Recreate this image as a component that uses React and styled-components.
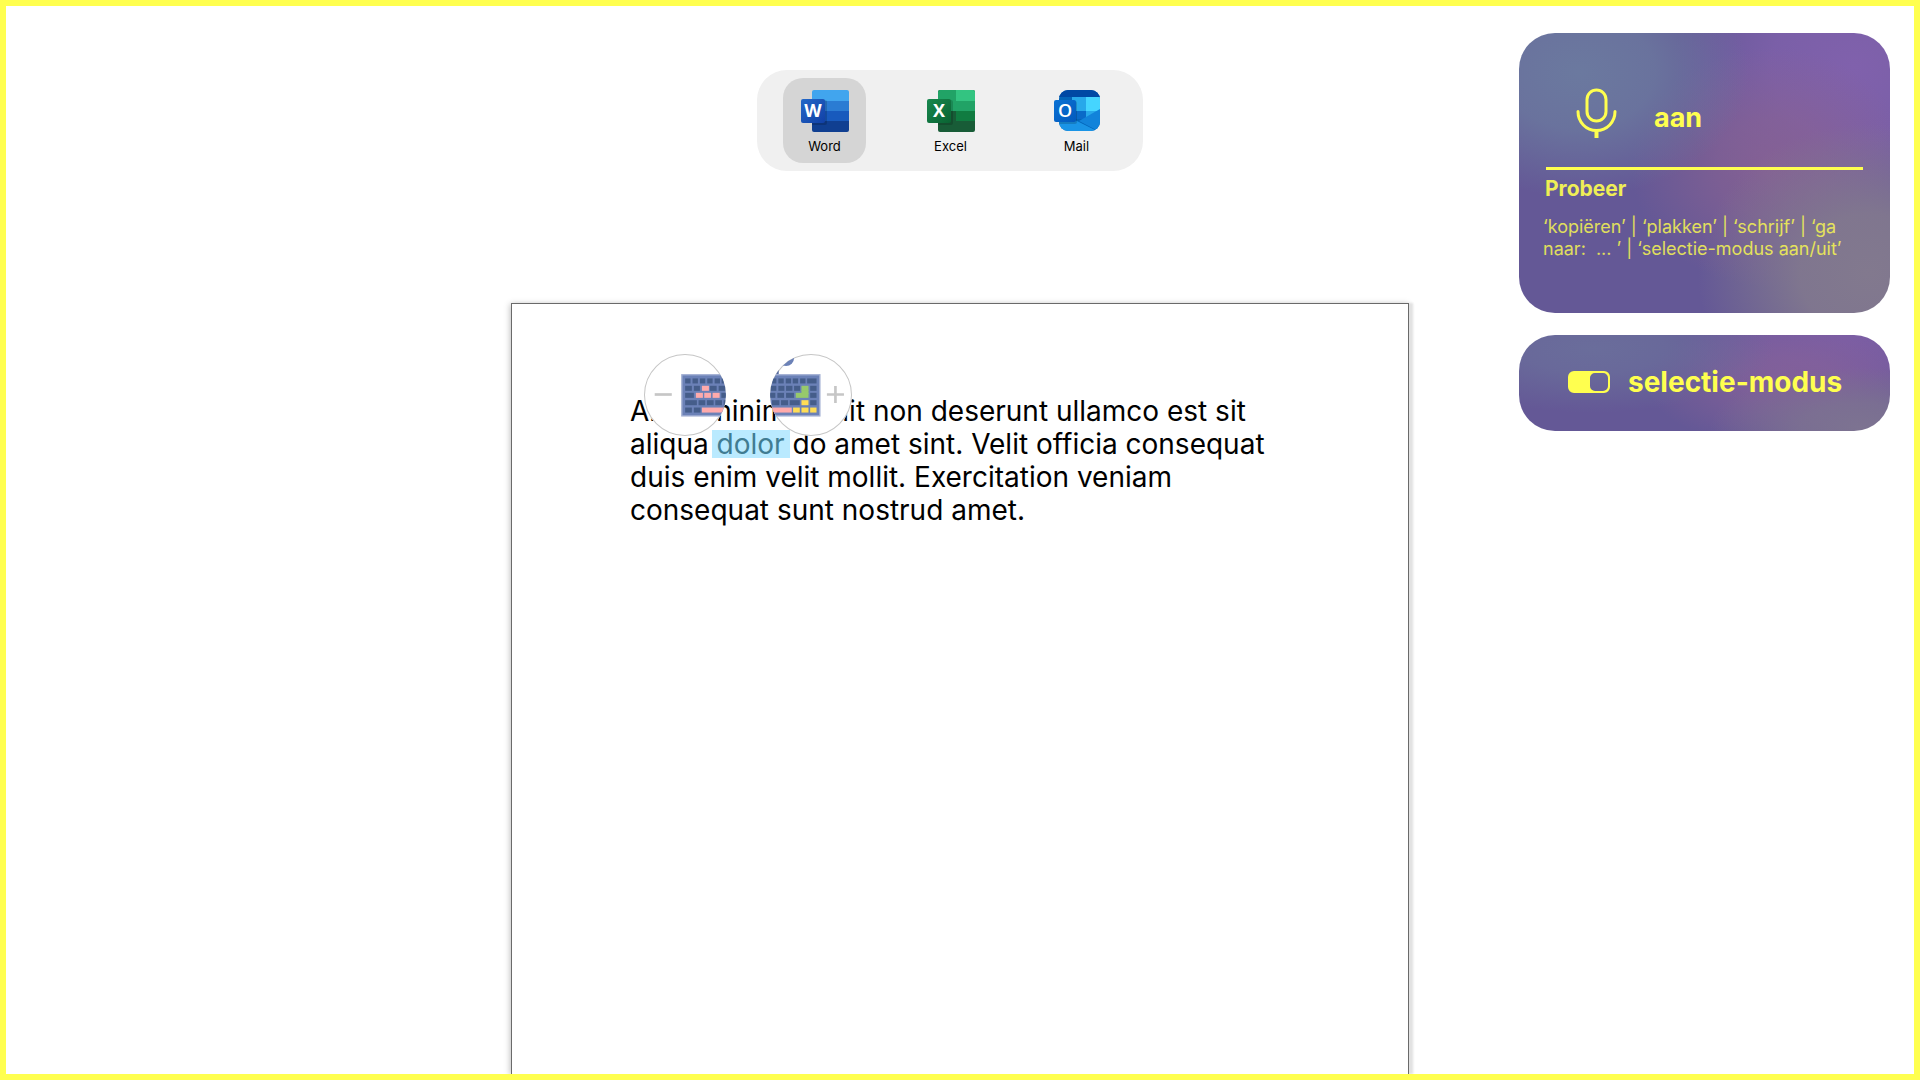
import React, { useState } from "react";
import styled, { createGlobalStyle, css } from "styled-components";

const YELLOW = "#ffff4f";

const GlobalStyle = createGlobalStyle`
  *, *::before, *::after { box-sizing: border-box; }
  body {
    margin: 0;
    background: #ffffff;
    color: #000000;
    font-family: Inter, "Noto Sans", sans-serif;
  }
  button { font: inherit; color: inherit; border: 0; background: none; padding: 0; cursor: pointer; }
  h2, p { margin: 0; }
`;

const Frame = styled.div`
  min-height: 100vh;
  border: 6px solid ${YELLOW};
  display: grid;
  grid-template-columns: 1fr minmax(0, 898px) 1fr;
`;

const Workspace = styled.main`
  grid-column: 2;
  display: flex;
  flex-direction: column;
`;

const ToolbarArea = styled.header`
  display: flex;
  justify-content: center;
  padding: 64px 20px 132px 0;
`;

const Toolbar = styled.nav`
  display: flex;
  gap: 43px;
  padding: 8px 25px 8px 26px;
  border-radius: 30px;
  background: #f0f0f0;
`;

const AppButton = styled.button`
  && {
    width: 83px;
    height: 85px;
    padding: 12px 0 0;
    display: flex;
    flex-direction: column;
    align-items: center;
    gap: 7px;
    border-radius: 20px;
    font-size: 13px;
    line-height: 15px;
    background: ${(p) => (p.$active ? "#d5d5d5" : "transparent")};
  }
`;

const Paper = styled.article`
  flex: 1;
  position: relative;
  padding: 91px 138px 91px 118px;
  border: 1px solid #6a6a6a;
  border-bottom: 0;
  background: #ffffff;
  box-shadow: 4px 0 2px 0 #e2e2e2, -1px 1px 6px 0 rgba(0, 0, 0, 0.25);
  clip-path: inset(-8px -8px 0 -8px);
`;

const Paragraph = styled.p`
  font-size: 28px;
  line-height: 33px;
`;

const Selection = styled.mark`
  display: inline-block;
  line-height: 28px;
  color: #417c92;
  background: #baeaff;
  box-shadow: -5px 0 #baeaff, 5px 0 #baeaff;
`;

const HandleGroup = styled.div`
  position: absolute;
  left: 132px;
  top: 50px;
  display: flex;
  gap: 44px;
`;

const Handle = styled.button`
  && {
    width: 82px;
    height: 82px;
    border-radius: 50%;
    background: #ffffff;
  }
  svg { display: block; }
`;

const Sidebar = styled.aside`
  justify-self: end;
  align-self: start;
  width: 371px;
  margin: 27px 24px 0 0;
  display: flex;
  flex-direction: column;
  gap: 22px;
`;

const cardSurface = css`
  border-radius: 36px;
  color: ${YELLOW};
  background-color: #645896;
`;

const VoiceCard = styled.section`
  ${cardSurface}
  min-height: 280px;
  padding: 47px 26px 0;
  background-image:
    radial-gradient(ellipse 170px 125px at 16% 14%, #6b799f 0%, #6b799fcc 45%, #6b799f00 100%),
    radial-gradient(ellipse 170px 150px at 94% 86%, #82798e 0%, #82798ee6 40%, #82798e00 100%),
    radial-gradient(ellipse 140px 120px at 68% 48%, #8a6292cc 0%, #8a629299 40%, #8a629200 100%),
    radial-gradient(ellipse 180px 160px at 90% 12%, #8061ac 0%, #8061accc 45%, #8061ac00 100%);
`;

const MicButton = styled.button`
  && {
    display: flex;
    align-items: center;
    gap: 31px;
    height: 74px;
    padding-left: 26px;
    font-size: 27px;
    line-height: 33px;
    font-weight: 700;
  }
  svg { margin-bottom: 8px; }
`;

const Rule = styled.hr`
  height: 3px;
  margin: 13px 1px 0;
  border: 0;
  background: ${YELLOW};
`;

const TryTitle = styled.h2`
  margin-top: 6px;
  font-size: 21px;
  line-height: 26px;
  font-weight: 700;
  opacity: 0.9;
`;

const TryText = styled.p`
  margin: 14px 0 0 -2px;
  font-size: 18px;
  line-height: 22px;
  white-space: pre-wrap;
  opacity: 0.8;
`;

const ModeCard = styled.label`
  ${cardSurface}
  height: 96px;
  display: flex;
  align-items: center;
  gap: 18px;
  padding: 0 0 2px 49px;
  font-size: 28px;
  line-height: 33px;
  font-weight: 700;
  cursor: pointer;
  background-image:
    radial-gradient(ellipse 180px 64px at 20% 14%, #6a6d9b 0%, #6a6d9bcc 40%, #6a6d9b00 100%),
    radial-gradient(ellipse 150px 60px at 92% 96%, #7d7391 0%, #7d7391cc 40%, #7d739100 100%),
    radial-gradient(ellipse 140px 64px at 72% 50%, #876298cc 0%, #87629899 40%, #87629800 100%),
    radial-gradient(ellipse 180px 72px at 88% 6%, #7a5da5 0%, #7a5da5cc 40%, #7a5da500 100%);
`;

const Switch = styled.span`
  position: relative;
  display: block;
  width: 42px;
  height: 22px;
  svg { display: block; transform: ${(p) => (p.$on ? "none" : "scaleX(-1)")}; }
`;

const SwitchInput = styled.input`
  position: absolute;
  inset: 0;
  width: 100%;
  height: 100%;
  margin: 0;
  opacity: 0;
  cursor: pointer;
`;

const IconLetter = styled.text`
  font-family: "Open Sans", "Noto Sans", sans-serif;
  font-weight: ${(p) => p.$weight || 700};
  font-size: 18px;
  fill: #ffffff;
  text-anchor: middle;
`;

function WordIcon() {
  return (
    <svg width="48" height="42" viewBox="0 0 48 42" aria-hidden="true">
      <defs>
        <clipPath id="wordPage"><rect x="11" width="37" height="42" rx="2" /></clipPath>
        <linearGradient id="wordTile" x1="0" y1="0" x2="1" y2="1">
          <stop offset="0" stopColor="#2368c8" /><stop offset="1" stopColor="#1140a6" />
        </linearGradient>
      </defs>
      <g clipPath="url(#wordPage)">
        <rect x="11" width="37" height="11" fill="#41a5ee" />
        <rect x="11" y="11" width="37" height="10" fill="#2b7cd3" />
        <rect x="11" y="21" width="37" height="10" fill="#185abd" />
        <rect x="11" y="31" width="37" height="11" fill="#103f91" />
        <rect x="8" y="10" width="18" height="25" rx="2" fill="#000" opacity=".16" />
      </g>
      <rect y="9" width="24" height="24" rx="2" fill="url(#wordTile)" />
      <IconLetter x="12" y="27">W</IconLetter>
    </svg>
  );
}

function ExcelIcon() {
  return (
    <svg width="48" height="42" viewBox="0 0 48 42" aria-hidden="true">
      <defs>
        <clipPath id="excelPage"><rect x="11" width="37" height="42" rx="2" /></clipPath>
        <linearGradient id="excelTile" x1="0" y1="0" x2="1" y2="1">
          <stop offset="0" stopColor="#18884f" /><stop offset="1" stopColor="#0a6332" />
        </linearGradient>
      </defs>
      <g clipPath="url(#excelPage)">
        <rect x="11" width="37" height="42" fill="#185c37" />
        <rect x="11" width="18" height="21" fill="#21a366" />
        <rect x="29" width="19" height="11" fill="#33c481" />
        <rect x="29" y="11" width="19" height="10" fill="#21a366" />
        <rect x="29" y="21" width="19" height="10" fill="#107c41" />
        <rect x="8" y="10" width="18" height="25" rx="2" fill="#000" opacity=".16" />
      </g>
      <rect y="9" width="24" height="24" rx="2" fill="url(#excelTile)" />
      <IconLetter x="12" y="27">X</IconLetter>
    </svg>
  );
}

function MailIcon() {
  return (
    <svg width="48" height="42" viewBox="0 0 48 42" aria-hidden="true">
      <defs>
        <clipPath id="mailBody"><rect x="6" width="41" height="41" rx="9" /></clipPath>
        <linearGradient id="mailTile" x1="0" y1="0" x2="1" y2="1">
          <stop offset="0" stopColor="#0a72d4" /><stop offset="1" stopColor="#0359bd" />
        </linearGradient>
      </defs>
      <g clipPath="url(#mailBody)">
        <rect x="6" width="41" height="42" fill="#0364b8" />
        <rect x="6" width="41" height="7" fill="#0048a4" />
        <rect x="19" y="7" width="14" height="14" fill="#28a8ea" />
        <rect x="19" y="21" width="14" height="8" fill="#0a6ac8" />
        <rect x="33" y="7" width="14" height="14" fill="#45d5ff" />
        <rect x="33" y="21" width="14" height="8" fill="#28a8ea" />
        <path d="M47 19 26 31 47 42Z" fill="#1283da" />
        <path d="M6 22 44 41 40 42H6Z" fill="#1a94e6" />
        <rect x="4" y="11" width="20" height="23" rx="2" fill="#000" opacity=".16" />
      </g>
      <rect x="1" y="10" width="22" height="22" rx="2" fill="url(#mailTile)" />
      <IconLetter x="12" y="27" $weight={600}>O</IconLetter>
    </svg>
  );
}

const ROW_Y = [115, 137, 158, 180, 202];

// Each key is [row, x, width, colour].
function Keys({ keys }) {
  return keys.map(([row, x, width, fill = "#455d8a"]) => (
    <rect key={`${row}-${x}`} x={x} y={ROW_Y[row]} width={width} height="15" fill={fill} />
  ));
}

const PINK = "#ffaaab";
const GOLD = "#ffdd55";
const LEAF = "#97c96b";

const LEFT_KEYS = [
  [0, 196, 16], [0, 218, 16], [0, 240, 16], [0, 262, 16], [0, 284, 16], [0, 305, 16],
  [1, 196, 20], [1, 222, 18], [1, 246, 21, PINK], [1, 270, 20], [1, 296, 20],
  [2, 196, 26], [2, 228, 21, PINK], [2, 253, 20, PINK], [2, 278, 21, PINK], [2, 304, 18],
  [3, 196, 35], [3, 236, 20], [3, 261, 20], [3, 286, 20], [3, 311, 18],
  [4, 196, 20], [4, 222, 20], [4, 246, 80, PINK],
];

const RIGHT_KEYS = [
  [0, 455, 15], [0, 476, 16], [0, 498, 16], [0, 519, 16], [0, 541, 16], [0, 562, 28],
  [1, 453, 17], [1, 476, 18], [1, 499, 19], [1, 523, 18], [1, 545, 21, LEAF], [1, 571, 19],
  [2, 449, 18], [2, 473, 20], [2, 499, 24], [2, 528, 38, LEAF], [2, 571, 19],
  [3, 457, 22], [3, 484, 21], [3, 510, 30], [3, 545, 21, GOLD], [3, 571, 19],
  [4, 440, 76, PINK], [4, 520, 20, GOLD], [4, 545, 21, GOLD], [4, 571, 19, GOLD],
];

function ShrinkDrawing() {
  return (
    <svg width="82" height="82" viewBox="73 42 245 245" aria-hidden="true">
      <defs><clipPath id="shrinkDisc"><circle cx="195.500" cy="164.500" r="122" /></clipPath></defs>
      <circle cx="195.500" cy="164.500" r="121" fill="#fff" stroke="#c6c6c6" strokeWidth="3" />
      <path d="M105 163H156" stroke="#c6c6c6" strokeWidth="8" />
      <g clipPath="url(#shrinkDisc)">
        <rect x="186" y="104" width="150" height="123" fill="#6b81b7" stroke="#a3b0d3" strokeWidth="4" />
        <Keys keys={LEFT_KEYS} />
      </g>
    </svg>
  );
}

function GrowDrawing() {
  return (
    <svg width="82" height="82" viewBox="451 42 245 245" aria-hidden="true">
      <defs><clipPath id="growDisc"><circle cx="573.500" cy="164.500" r="122" /></clipPath></defs>
      <circle cx="573.500" cy="164.500" r="121" fill="#fff" stroke="#c6c6c6" strokeWidth="3" />
      <path d="M621 163H672M646.500 137.500V188.500" stroke="#c6c6c6" strokeWidth="8" />
      <g clipPath="url(#growDisc)">
        <circle cx="499" cy="54" r="24" fill="#6b81b7" />
        <path d="M466 80H477V104H440V80Z" fill="#53699f" />
        <rect x="430" y="104" width="170" height="123" fill="#6b81b7" stroke="#a3b0d3" strokeWidth="4" />
        <Keys keys={RIGHT_KEYS} />
        <rect x="545" y="150" width="21" height="12" fill={LEAF} />
      </g>
    </svg>
  );
}

function MicDrawing() {
  return (
    <svg width="52" height="50" viewBox="0 0 52 50" fill="none" stroke={YELLOW} strokeWidth="3" strokeLinecap="round" aria-hidden="true">
      <rect x="16" y="2" width="19" height="31" rx="9.500" />
      <path d="M7 23.500C7 34 15 42.500 25.500 42.500S44 34 44 23.500" />
      <path d="M25.500 42.500V50" strokeWidth="4" strokeLinecap="butt" />
    </svg>
  );
}

const APPS = [
  { name: "Word", Icon: WordIcon },
  { name: "Excel", Icon: ExcelIcon },
  { name: "Mail", Icon: MailIcon },
];

export default function App() {
  const [activeApp, setActiveApp] = useState("Word");
  const [selecting, setSelecting] = useState(true);

  return (
    <>
      <GlobalStyle />
      <Frame>
        <Workspace>
          <ToolbarArea>
            <Toolbar>
              {APPS.map(({ name, Icon }) => (
                <AppButton key={name} type="button" $active={name === activeApp} onClick={() => setActiveApp(name)}>
                  <Icon />
                  {name}
                </AppButton>
              ))}
            </Toolbar>
          </ToolbarArea>
          <Paper>
            <Paragraph>
              Amet minim mollit non deserunt ullamco est sit aliqua <Selection>dolor</Selection> do amet
              sint. Velit officia consequat duis enim velit mollit. Exercitation veniam consequat sunt
              nostrud amet.
            </Paragraph>
            <HandleGroup>
              <Handle type="button" aria-label="Selectie verkleinen"><ShrinkDrawing /></Handle>
              <Handle type="button" aria-label="Selectie vergroten"><GrowDrawing /></Handle>
            </HandleGroup>
          </Paper>
        </Workspace>
        <Sidebar>
          <VoiceCard>
            <MicButton type="button"><MicDrawing />aan</MicButton>
            <Rule />
            <TryTitle>Probeer</TryTitle>
            <TryText>{"‘kopiëren’ | ‘plakken’ | ‘schrijf’ | ‘ga naar:  ... ’ | ‘selectie-modus aan/uit’"}</TryText>
          </VoiceCard>
          <ModeCard>
            <Switch $on={selecting}>
              <SwitchInput type="checkbox" checked={selecting} onChange={(e) => setSelecting(e.target.checked)} />
              <svg width="42" height="22" viewBox="0 0 42 22" aria-hidden="true">
                <path
                  fillRule="evenodd"
                  fill={YELLOW}
                  d="M6 0H36A6 6 0 0 1 42 6V16A6 6 0 0 1 36 22H6A6 6 0 0 1 0 16V6A6 6 0 0 1 6 0ZM27 2A5 5 0 0 0 22 7V15A5 5 0 0 0 27 20H35A5 5 0 0 0 40 15V7A5 5 0 0 0 35 2Z"
                />
              </svg>
            </Switch>
            selectie-modus
          </ModeCard>
        </Sidebar>
      </Frame>
    </>
  );
}
